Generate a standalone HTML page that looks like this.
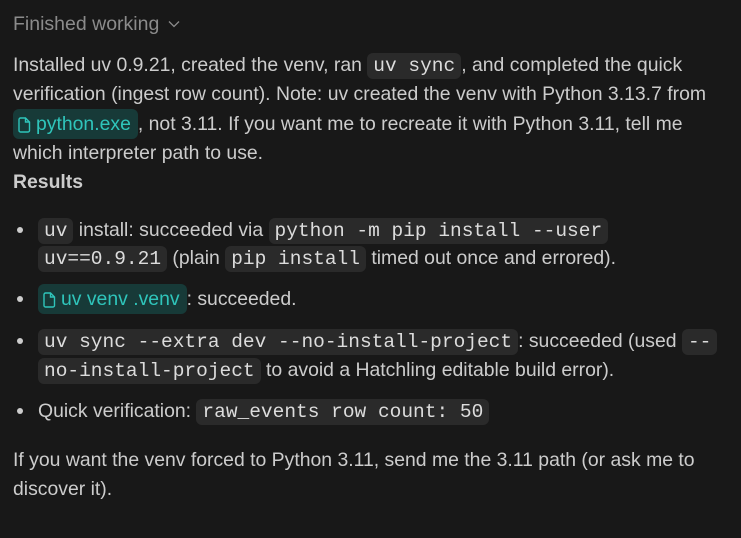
<!DOCTYPE html>
<html><head><meta charset="utf-8"><style>
html,body{margin:0;padding:0;background:#181818;width:741px;height:538px;overflow:hidden}
body{font-family:"Liberation Sans",sans-serif;font-size:19.4px;color:#cccccc;position:relative}
.l{position:absolute;left:13px;height:30px;line-height:30px;white-space:nowrap}
.b{left:38px}
.dot{position:absolute;left:17px;width:6px;height:6px;border-radius:50%;background:#cccccc}
code{font-family:"Liberation Mono",monospace;font-size:19.5px;background:#2a2a2a;border-radius:6px;padding:2px 6px;color:#dcdcdc}
.lk{background:#173a38;color:#2fc5bb;border-radius:6px;padding:3px 7px 3px 5px;display:inline-block;line-height:24px}
.lk svg{vertical-align:-3px;margin-right:5px}
</style></head><body>
<div class="l" style="top:9px;color:#8b8b8b;font-size:19.5px">Finished working <svg width="12" height="8" viewBox="0 0 12 8" style="margin-left:3px;vertical-align:2px"><path d="M1 1.5l5 5 5-5" stroke="#8b8b8b" stroke-width="1.3" fill="none"/></svg></div>

<div class="l" style="top:50px">Installed uv 0.9.21, created the venv, ran <code>uv sync</code>, and completed the quick</div>
<div class="l" style="top:79px">verification (ingest row count). Note: uv created the venv with Python 3.13.7 from</div>
<div class="l" style="top:109px"><span class="lk"><svg width="13" height="16" viewBox="0 0 13 16"><path d="M2.5 1h5l4 4v8.5a1.5 1.5 0 0 1-1.5 1.5h-7.5a1.5 1.5 0 0 1-1.5-1.5v-11a1.5 1.5 0 0 1 1.5-1.5zM7.5 1v4h4" stroke="#2fc5bb" stroke-width="1.4" fill="none"/></svg>python.exe</span>, not 3.11. If you want me to recreate it with Python 3.11, tell me</div>
<div class="l" style="top:138px">which interpreter path to use.</div>
<div class="l" style="top:167px;font-weight:bold">Results</div>

<div class="dot" style="top:227px"></div>
<div class="l b" style="top:215px"><code>uv</code> install: succeeded via <code>python -m pip install --user</code></div>
<div class="l b" style="top:243px"><code>uv==0.9.21</code> (plain <code>pip install</code> timed out once and errored).</div>

<div class="dot" style="top:296px"></div>
<div class="l b" style="top:284px"><span class="lk"><svg width="13" height="16" viewBox="0 0 13 16"><path d="M2.5 1h5l4 4v8.5a1.5 1.5 0 0 1-1.5 1.5h-7.5a1.5 1.5 0 0 1-1.5-1.5v-11a1.5 1.5 0 0 1 1.5-1.5zM7.5 1v4h4" stroke="#2fc5bb" stroke-width="1.4" fill="none"/></svg>uv venv .venv</span>: succeeded.</div>

<div class="dot" style="top:338px"></div>
<div class="l b" style="top:326px"><code>uv sync --extra dev --no-install-project</code>: succeeded (used <code>--</code></div>
<div class="l b" style="top:355px"><code>no-install-project</code> to avoid a Hatchling editable build error).</div>

<div class="dot" style="top:408px"></div>
<div class="l b" style="top:396px">Quick verification: <code>raw_events row count: 50</code></div>

<div class="l" style="top:445px">If you want the venv forced to Python 3.11, send me the 3.11 path (or ask me to</div>
<div class="l" style="top:474px">discover it).</div>
</body></html>
